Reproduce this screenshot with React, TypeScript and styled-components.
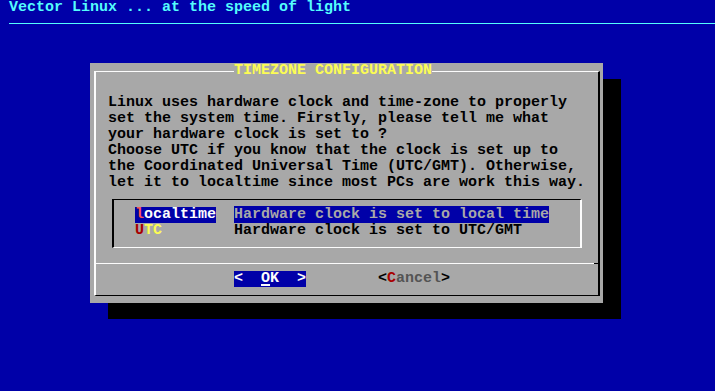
import { createGlobalStyle, styled } from "styled-components";

const BLUE = "#0000a8";
const GRAY = "#a8a8a8";
const WHITE = "#fcfcfc";
const BLACK = "#000000";
const CYAN = "#54fcfc";
const YELLOW = "#fcfc54";
const RED = "#a80000";
const LRED = "#fc5454";
const DGRAY = "#545454";

const GlobalStyle = createGlobalStyle`
  html, body {
    margin: 0;
    padding: 0;
    background: ${BLUE};
  }
`;

const Screen = styled.div`
  width: 715px;
  height: 391px;
  overflow: hidden;
  background: ${BLUE};
  display: flex;
  flex-direction: column;
  font-family: "Liberation Mono", "DejaVu Sans Mono", monospace;
  font-weight: bold;
  font-size: 15px;
  line-height: 16px;
  white-space: pre;
`;

const Backtitle = styled.div`
  height: 16px;
  padding-left: 9px;
  color: ${CYAN};
`;

const Rule = styled.div`
  margin: 7px 0 7px 9px;
  height: 1px;
  background: ${CYAN};
`;

const Dialog = styled.div`
  margin: 32px 0 0 90px;
  width: 513px;
  height: 240px;
  box-sizing: border-box;
  padding: 8px 3px 7px 4px;
  background: ${GRAY};
  box-shadow: 18px 16px 0 0 ${BLACK};
  display: flex;
`;

const Frame = styled.div`
  flex: 1;
  display: flex;
  flex-direction: column;
  border-top: 1px solid ${WHITE};
  border-left: 2px solid ${WHITE};
  border-right: 2px solid ${BLACK};
  border-bottom: 1px solid ${BLACK};
  padding-bottom: 8px;
`;

const Title = styled.div`
  align-self: flex-start;
  margin: -9px 0 0 138px;
  height: 16px;
  background: ${GRAY};
  color: ${YELLOW};
`;

const Prompt = styled.div`
  margin: 16px 0 0 12px;
  color: ${BLACK};
`;

const MenuBox = styled.div`
  margin: 8px 16px 0 16px;
  padding: 7px 0 8px 21px;
  border-top: 1px solid ${BLACK};
  border-left: 2px solid ${BLACK};
  border-right: 2px solid ${WHITE};
  border-bottom: 1px solid ${WHITE};
`;

const Item = styled.div`
  display: flex;
  gap: 18px;
  height: 16px;
`;

const Tag = styled.span<{ $selected?: boolean }>`
  width: 81px;
  color: ${(p) => (p.$selected ? WHITE : YELLOW)};
  background: ${(p) => (p.$selected ? BLUE : "transparent")};
`;

const TagKey = styled.span<{ $selected?: boolean }>`
  color: ${(p) => (p.$selected ? LRED : RED)};
`;

const Desc = styled.span<{ $selected?: boolean }>`
  color: ${(p) => (p.$selected ? GRAY : BLACK)};
  background: ${(p) => (p.$selected ? BLUE : "transparent")};
`;

const Separator = styled.div`
  margin-top: 15px;
  height: 1px;
  background: ${WHITE};
  border-right: 4px solid ${BLACK};
`;

const ButtonRow = styled.div`
  margin-top: 7px;
  height: 16px;
  padding-left: 138px;
  display: flex;
  gap: 72px;
`;

const Button = styled.span<{ $active?: boolean }>`
  width: 72px;
  color: ${(p) => (p.$active ? WHITE : BLACK)};
  background: ${(p) => (p.$active ? BLUE : "transparent")};
`;

const ButtonKey = styled.span<{ $active?: boolean }>`
  color: ${(p) => (p.$active ? WHITE : RED)};
  text-decoration: ${(p) => (p.$active ? "underline" : "none")};
  text-decoration-thickness: 2px;
  text-underline-offset: 2px;
`;

const ButtonLabel = styled.span<{ $active?: boolean }>`
  color: ${(p) => (p.$active ? WHITE : DGRAY)};
`;

const promptLines = [
  "Linux uses hardware clock and time-zone to properly",
  "set the system time. Firstly, please tell me what",
  "your hardware clock is set to ?",
  "Choose UTC if you know that the clock is set up to",
  "the Coordinated Universal Time (UTC/GMT). Otherwise,",
  "let it to localtime since most PCs are work this way.",
];

const items = [
  { tag: "localtime", desc: "Hardware clock is set to local time", selected: true },
  { tag: "UTC", desc: "Hardware clock is set to UTC/GMT", selected: false },
];

export default function App() {
  return (
    <Screen>
      <GlobalStyle />
      <Backtitle>Vector Linux ... at the speed of light</Backtitle>
      <Rule />
      <Dialog>
        <Frame>
          <Title>TIMEZONE CONFIGURATION</Title>
          <Prompt>{promptLines.join("\n")}</Prompt>
          <MenuBox>
            {items.map((it) => (
              <Item key={it.tag}>
                <Tag $selected={it.selected}>
                  <TagKey $selected={it.selected}>{it.tag[0]}</TagKey>
                  {it.tag.slice(1)}
                </Tag>
                <span>
                  <Desc $selected={it.selected}>{it.desc}</Desc>
                </span>
              </Item>
            ))}
          </MenuBox>
          <Separator />
          <ButtonRow>
            <Button $active>
              {"<  "}
              <ButtonKey $active>O</ButtonKey>
              <ButtonLabel $active>K</ButtonLabel>
              {"  >"}
            </Button>
            <Button>
              {"<"}
              <ButtonKey>C</ButtonKey>
              <ButtonLabel>ancel</ButtonLabel>
              {">"}
            </Button>
          </ButtonRow>
        </Frame>
      </Dialog>
    </Screen>
  );
}
